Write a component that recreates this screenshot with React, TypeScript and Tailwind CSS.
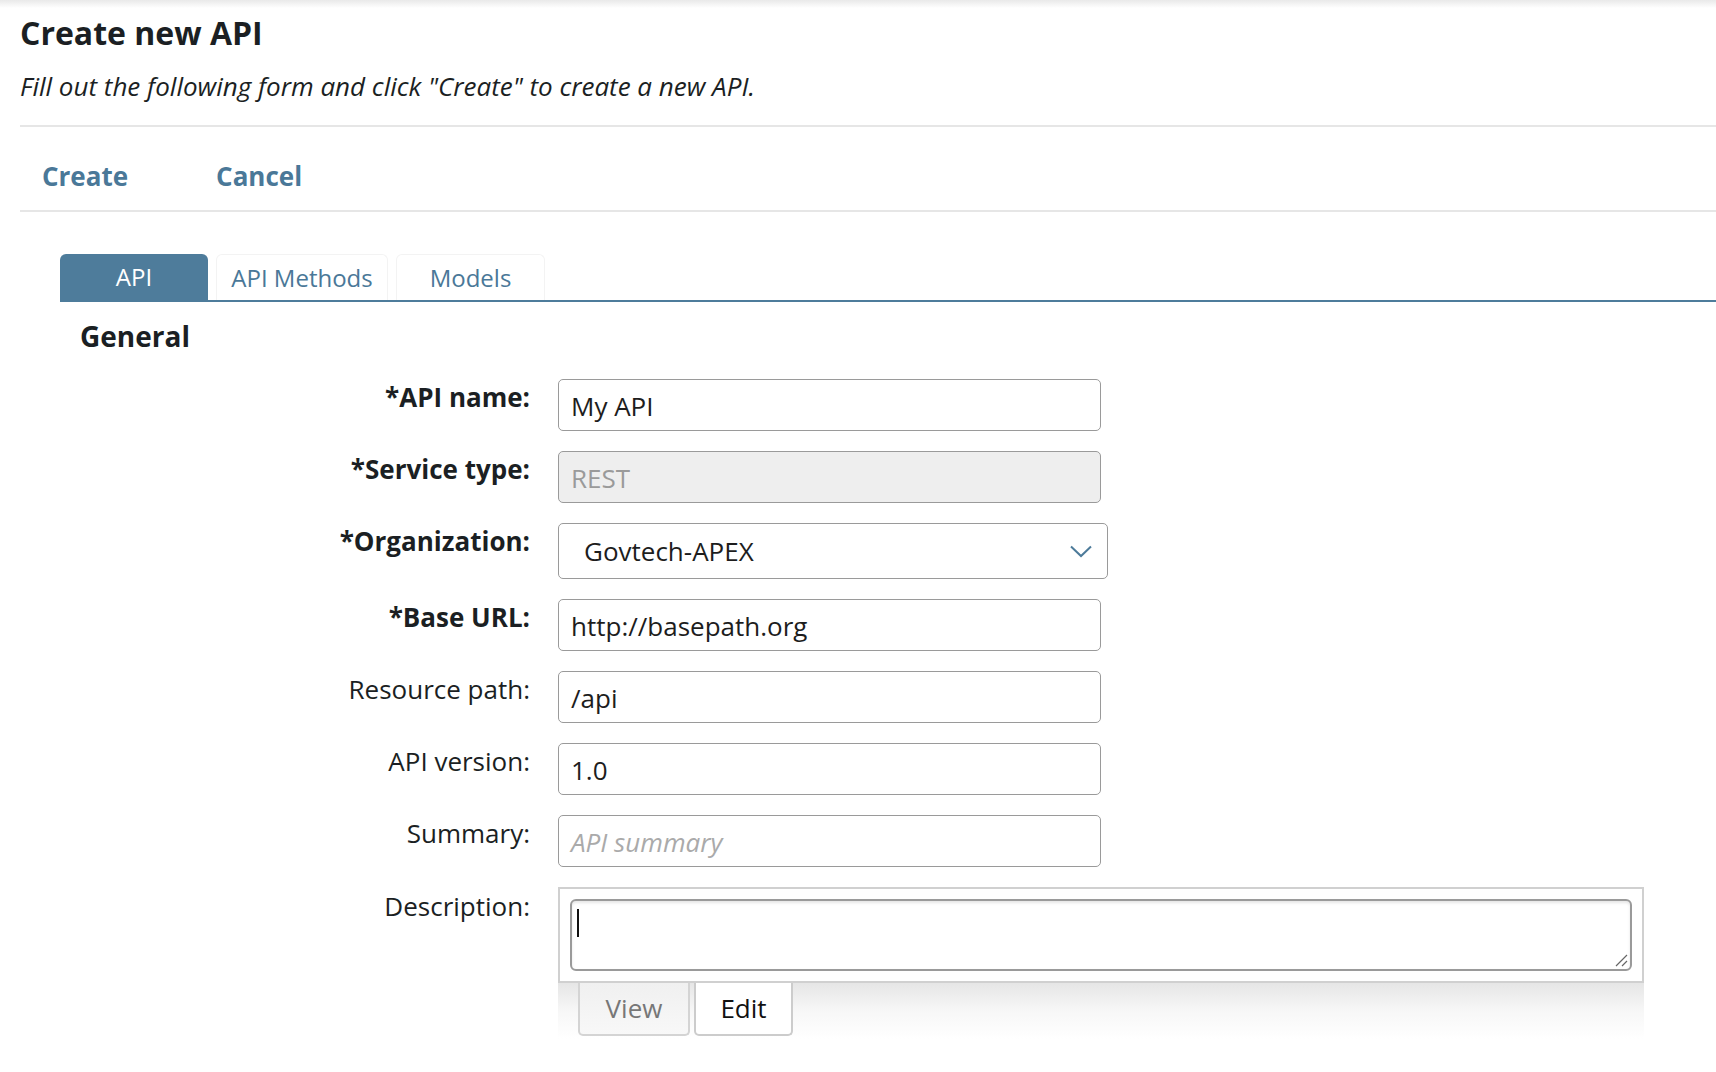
import React from "react";

const FONT = { fontFamily: '"Open Sans", "Liberation Sans", sans-serif' };

type Row = {
  label: string;
  required?: boolean;
  kind: "text" | "disabled" | "select" | "placeholder";
  value: string;
};

const rows: Row[] = [
  { label: "*API name:", required: true, kind: "text", value: "My API" },
  { label: "*Service type:", required: true, kind: "disabled", value: "REST" },
  { label: "*Organization:", required: true, kind: "select", value: "Govtech-APEX" },
  { label: "*Base URL:", required: true, kind: "text", value: "http://basepath.org" },
  { label: "Resource path:", kind: "text", value: "/api" },
  { label: "API version:", kind: "text", value: "1.0" },
  { label: "Summary:", kind: "placeholder", value: "API summary" },
];

const Field = ({ row }: { row: Row }) => {
  if (row.kind === "select") {
    return (
      <div className="flex h-[56px] w-[550px] items-center justify-between rounded-[5px] border-[1.5px] border-[#9a9a9a] bg-white pl-[25px] pr-[14px] text-[26px] text-[#1d1d1d]">
        <span>{row.value}</span>
        <svg width="24" height="14" viewBox="0 0 24 14" fill="none">
          <path d="M2 2.5l10 9.5 10-9.5" stroke="#4d7b9a" strokeWidth="2" />
        </svg>
      </div>
    );
  }
  const base =
    "flex h-[52px] w-[543px] items-center rounded-[5px] border-[1.5px] border-[#9a9a9a] px-[12px] pt-[2px] text-[26px]";
  if (row.kind === "disabled") {
    return <div className={`${base} bg-[#eeeeee] text-[#9a9a9a]`}>{row.value}</div>;
  }
  if (row.kind === "placeholder") {
    return <div className={`${base} bg-white italic text-[#aaaaaa]`}>{row.value}</div>;
  }
  return <div className={`${base} bg-white text-[#1d1d1d]`}>{row.value}</div>;
};

export default function App() {
  return (
    <div className="min-h-[1072px] w-full overflow-hidden bg-white text-[#1b1f23]" style={FONT}>
      {/* faint shadow from header above */}
      <div className="h-[8px] bg-gradient-to-b from-[#e9e9e9] to-white" />

      <div className="pl-[20px]">
        <h1 className="mt-[3px] text-[32px] font-bold leading-[44px] text-[#1b1f23]">Create new API</h1>
        <p className="mt-[13px] text-[26px] italic leading-[36px] text-[#1b1f23]">
          Fill out the following form and click "Create" to create a new API.
        </p>

        <div className="mt-[21px] h-[2px] bg-[#e6e6e6]" />
        <div className="flex h-[83px] items-center gap-[88px] pl-[22px] pt-[15px] text-[26px] font-bold text-[#4a7898]">
          <span>Create</span>
          <span>Cancel</span>
        </div>
        <div className="h-[2px] bg-[#e6e6e6]" />

        {/* tabs */}
        <div className="ml-[40px] mt-[42px] flex items-end gap-[8px] border-b-2 border-[#4e7c9b]">
          <div className="flex h-[46px] w-[148px] items-center justify-center rounded-t-[6px] bg-[#4e7c9b] text-[24px] text-white">
            API
          </div>
          <div className="flex h-[46px] w-[172px] items-center justify-center rounded-t-[6px] border border-b-0 border-[#f3f3f3] text-[24px] text-[#4a7898]">
            API Methods
          </div>
          <div className="flex h-[46px] w-[149px] items-center justify-center rounded-t-[6px] border border-b-0 border-[#f3f3f3] text-[24px] text-[#4a7898]">
            Models
          </div>
        </div>

        <h2 className="ml-[60px] mt-[15px] text-[28px] font-bold leading-[38px] text-[#1b1f23]">General</h2>

        {/* form */}
        <div className="mt-[24px] flex flex-col gap-[20px]">
          {rows.map((row) => (
            <div key={row.label} className="flex items-start">
              <div
                className={`w-[510px] text-right text-[26px] leading-[36px] ${
                  row.required ? "font-bold" : ""
                } text-[#1b1f23]`}
              >
                {row.label}
              </div>
              <div className="ml-[28px]">
                <Field row={row} />
              </div>
            </div>
          ))}

          <div className="flex items-start">
            <div className="w-[510px] pt-[1px] text-right text-[26px] leading-[36px] text-[#1b1f23]">
              Description:
            </div>
            <div className="ml-[28px] flex w-[1086px] flex-col">
              <div className="border-2 border-[#d0d0d0] bg-white p-[10px]">
                <div className="relative h-[72px] rounded-[6px] border-2 border-[#9a9a9a] bg-white shadow-[inset_0_2px_3px_rgba(0,0,0,0.1)]">
                  <div className="absolute left-[5px] top-[8px] h-[28px] w-[1.5px] bg-[#111]" />
                  <svg className="absolute bottom-[2px] right-[2px]" width="14" height="14" viewBox="0 0 14 14">
                    <path d="M13 2L2 13M13 8L8 13" stroke="#666" strokeWidth="1.2" />
                  </svg>
                </div>
              </div>
              <div className="flex h-[56px] gap-[4px] bg-gradient-to-b from-[#e6e6e6] via-[#f7f7f7] to-white pl-[20px]">
                <div className="flex h-[53px] w-[112px] items-center justify-center rounded-b-[5px] border-2 border-t-0 border-[#d4d4d4] bg-gradient-to-b from-[#f0f0f0] to-[#f8f8f8] text-[26px] text-[#777]">
                  View
                </div>
                <div className="flex h-[53px] w-[99px] items-center justify-center rounded-b-[5px] border-2 border-t-0 border-[#cccccc] bg-white text-[26px] text-[#111]">
                  Edit
                </div>
              </div>
            </div>
          </div>
        </div>
      </div>
    </div>
  );
}
